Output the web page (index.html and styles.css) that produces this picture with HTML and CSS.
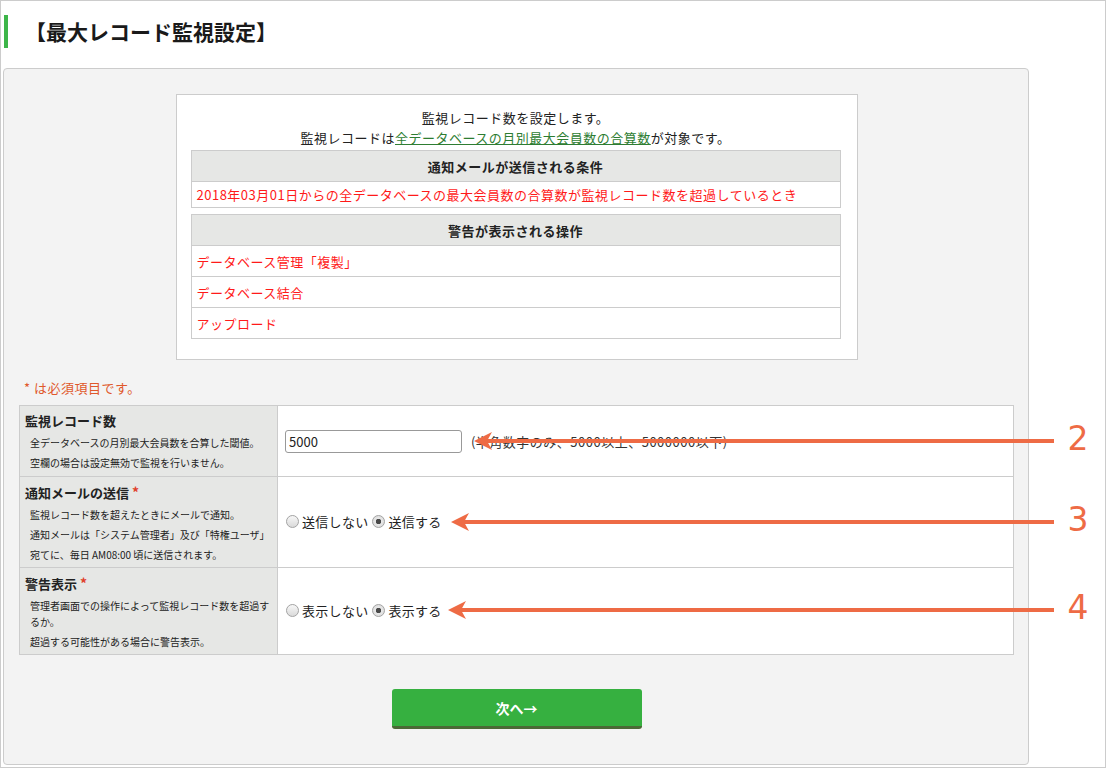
FILE: index.html
```html
<!DOCTYPE html>
<html lang="ja">

<head>
    <meta charset="UTF-8">
    <meta name="viewport" content="width=device-width, initial-scale=1.0">
    <title>最大レコード監視設定</title>
    <link rel="stylesheet" href="styles.css">
</head>

<body>
    <div class="frame">
        <h1 class="page-title">【最大レコード監視設定】</h1>

        <section class="panel">
            <div class="info">
                <p class="info-text">監視レコード数を設定します。<br>監視レコードは<a href="#">全データベースの月別最大会員数の合算数</a>が対象です。</p>

                <table class="list list-short">
                    <tr><th>通知メールが送信される条件</th></tr>
                    <tr><td>2018年03月01日からの全データベースの最大会員数の合算数が監視レコード数を超過しているとき</td></tr>
                </table>

                <table class="list">
                    <tr><th>警告が表示される操作</th></tr>
                    <tr><td>データベース管理「複製」</td></tr>
                    <tr><td>データベース結合</td></tr>
                    <tr><td>アップロード</td></tr>
                </table>
            </div>

            <p class="req-note">* は必須項目です。</p>

            <table class="form">
                <tr>
                    <th class="first">
                        <div class="label">監視レコード数</div>
                        <div class="desc">全データベースの月別最大会員数を合算した閾値。</div>
                        <div class="desc">空欄の場合は設定無効で監視を行いません。</div>
                    </th>
                    <td>
                        <input type="text" class="num" value="5000">
                        <span class="hint">(半角数字のみ、5000以上、5000000以下)</span>
                    </td>
                </tr>
                <tr>
                    <th>
                        <div class="label">通知メールの送信 <span class="req">*</span></div>
                        <div class="desc">監視レコード数を超えたときにメールで通知。</div>
                        <div class="desc">通知メールは「システム管理者」及び「特権ユーザ」</div>
                        <div class="desc">宛てに、毎日 AM08:00 頃に送信されます。</div>
                    </th>
                    <td>
                        <label class="opt"><input type="radio" name="mail">送信しない</label>
                        <label class="opt"><input type="radio" name="mail" checked>送信する</label>
                    </td>
                </tr>
                <tr>
                    <th>
                        <div class="label">警告表示 <span class="req">*</span></div>
                        <div class="desc">管理者画面での操作によって監視レコード数を超過するか。</div>
                        <div class="desc">超過する可能性がある場合に警告表示。</div>
                    </th>
                    <td>
                        <label class="opt"><input type="radio" name="warn">表示しない</label>
                        <label class="opt"><input type="radio" name="warn" checked>表示する</label>
                    </td>
                </tr>
            </table>

            <div class="actions">
                <button type="button" class="next">次へ→</button>
            </div>
        </section>

        <!-- annotation arrows -->
        <svg class="marks" width="1106" height="768" viewBox="0 0 1106 768">
            <rect x="485" y="438" width="568" height="4"/>
            <path d="M473 440 L491 431 L486 440 L491 449 Z"/>
            <text x="1077" y="449">2</text>

            <rect x="462" y="519" width="591" height="4"/>
            <path d="M450 521 L468 512 L463 521 L468 530 Z"/>
            <text x="1077" y="530">3</text>

            <rect x="459" y="607" width="594" height="4"/>
            <path d="M447 609 L465 600 L460 609 L465 618 Z"/>
            <text x="1077" y="618">4</text>
        </svg>
    </div>
</body>

</html>
```

FILE: styles.css
```css
* {
    margin: 0;
    padding: 0;
    box-sizing: border-box;
}

body {
    background: #fff;
    font-family: "Noto Sans CJK JP", "Noto Sans", sans-serif;
    font-size: 13px;
    color: #222;
}

.frame {
    position: relative;
    width: 1106px;
    height: 768px;
    border: 1px solid #ccc;
    overflow: hidden;
}

.page-title {
    margin: 14px 0 0 3px;
    height: 33px;
    line-height: 33px;
    border-left: 4px solid #3db549;
    padding-left: 17px;
    font-size: 21px;
    font-weight: bold;
    color: #1a1a1a;
}

.panel {
    margin: 20px 0 0 2px;
    width: 1026px;
    border: 1px solid #ccc;
    border-radius: 4px;
    background: #f3f3f3;
    padding: 25px 14px 35px 15px;
}

.info {
    width: 682px;
    margin: 0 auto;
    background: #fff;
    border: 1px solid #ccc;
    padding: 13px 16px 20px 14px;
    letter-spacing: 0.5px;
}

.info-text {
    text-align: center;
    line-height: 20px;
    margin-bottom: 2px;
}

.info-text a {
    color: #2e7d32;
    text-decoration: underline;
}

.list {
    width: 100%;
    border-collapse: collapse;
    margin-bottom: 6px;
}

.list:last-child {
    margin-bottom: 0;
}

.list th,
.list td {
    border: 1px solid #ccc;
}

.list th {
    background: #e6e7e5;
    height: 31px;
    font-weight: bold;
    text-align: center;
}

.list td {
    height: 31px;
    padding: 0 5px;
    color: #ff1a1a;
    background: #fff;
}

.list-short td {
    height: 26px;
}

.req-note {
    margin: 18px 0 7px 5px;
    line-height: 20px;
    color: #e0582b;
    letter-spacing: 0.5px;
}

.form {
    width: 100%;
    border-collapse: collapse;
    background: #fff;
}

.form th,
.form td {
    border: 1px solid #ccc;
    vertical-align: middle;
}

.form th {
    width: 258px;
    background: #e6e7e5;
    text-align: left;
    padding: 5px 2px 4px 5px;
    font-weight: normal;
    vertical-align: top;
}

.form th.first {
    padding-bottom: 5px;
}

.form td {
    padding: 0 7px;
}

.label {
    font-weight: bold;
    line-height: 20px;
}

.req {
    color: #e0402b;
    font-size: 14px;
}

.desc {
    font-size: 10px;
    line-height: 16px;
    margin-top: 4px;
    padding-left: 5px;
    color: #222;
}

.num {
    width: 177px;
    height: 23px;
    border: 1px solid #999;
    border-radius: 3px;
    padding: 0 3px;
    font-family: "Noto Sans CJK JP", "Noto Sans", sans-serif;
    font-size: 13px;
    color: #222;
    vertical-align: middle;
}

.hint {
    margin-left: 6px;
    color: #333;
    vertical-align: middle;
    letter-spacing: 0.5px;
}

.opt {
    display: inline-flex;
    align-items: center;
    letter-spacing: 0.3px;
}

.opt input {
    appearance: none;
    -webkit-appearance: none;
    width: 13px;
    height: 13px;
    margin: 0 3px 0 1px;
    border: 1px solid #a4a4a4;
    border-radius: 50%;
    background: linear-gradient(#f7f7f7, #dadada);
}

.opt input:checked {
    background: radial-gradient(circle, #4a4a4a 0 2.5px, #e8e8e8 3px, #d6d6d6 100%);
}

.actions {
    margin-top: 34px;
    text-align: center;
}

.next {
    width: 250px;
    height: 40px;
    border: none;
    border-bottom: 3px solid #4b6a36;
    border-radius: 3px;
    background: #36b040;
    color: #fff;
    font-family: "Noto Sans CJK JP", "Noto Sans", sans-serif;
    font-size: 14px;
    font-weight: bold;
}

.marks {
    position: absolute;
    top: 0;
    left: 0;
    pointer-events: none;
    fill: #ee6b45;
}

.marks text {
    font-family: "DejaVu Sans", sans-serif;
    font-size: 33px;
    text-anchor: middle;
}
```
